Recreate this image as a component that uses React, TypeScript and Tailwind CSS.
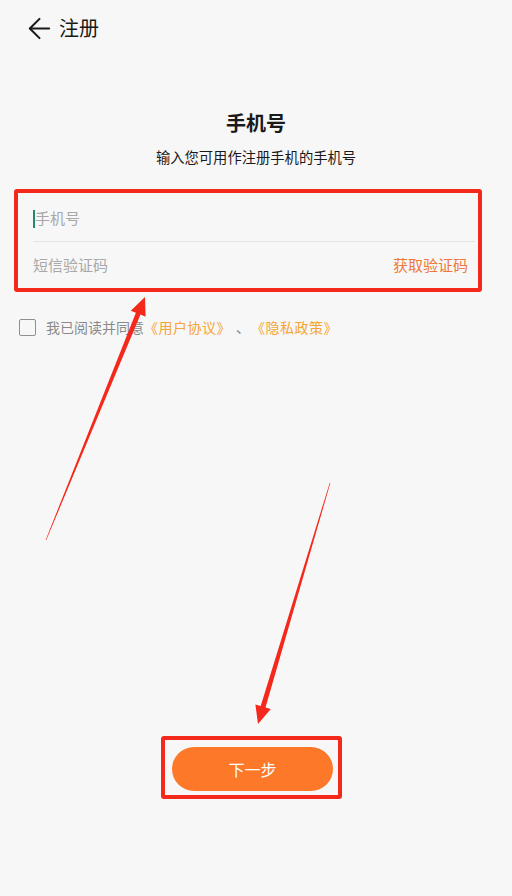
import { ArrowLeft } from "lucide-react";

const font = { fontFamily: '"Noto Sans CJK SC", "Noto Sans", sans-serif' };

function Arrows() {
  return (
    <svg className="pointer-events-none absolute inset-0" width="512" height="896" viewBox="0 0 512 896">
      <polygon
        fill="#f5281c"
        points="45.7,539.9 135.9,312.8 130.8,310.7 145,297 145.6,316.7 140.5,314.6 46.3,540.1"
      />
      <polygon
        fill="#f5281c"
        points="329.7,482.9 260.7,706.1 255.4,704.5 258,724 270.8,709.1 265.5,707.5 330.3,483.1"
      />
    </svg>
  );
}

export default function App() {
  return (
    <div className="relative h-[896px] w-[512px] overflow-hidden bg-[#f7f7f7] text-[#1a1a1a]" style={font}>
      <header className="flex h-14 items-center pl-[23px]">
        <ArrowLeft className="h-[33px] w-[33px]" strokeWidth={1.5} />
        <span className="ml-[3px] text-[20px]">注册</span>
      </header>

      <div className="mt-[53px] flex flex-col items-center">
        <h1 className="text-[20px] font-bold leading-7">手机号</h1>
        <p className="mt-[10px] text-[14.3px] leading-5 text-[#1a1a1a]">输入您可用作注册手机的手机号</p>
      </div>

      <div className="ml-[14px] mt-[22px] w-[468px] rounded-[3px] border-[4px] border-[#f5281c]">
        <div className="pl-[15px] pr-[3px]">
          <div className="flex h-[49px] items-center border-b border-[#e4e4e4] pt-[3px]">
            <span className="h-[18px] w-[2px] bg-[#1f8a70]" />
            <span className="text-[15px] text-[#a8a8a8]">手机号</span>
          </div>
          <div className="flex h-[46px] items-center justify-between pr-[7px]">
            <span className="text-[15px] text-[#a8a8a8]">短信验证码</span>
            <span className="text-[15px] text-[#f0773a]">获取验证码</span>
          </div>
        </div>
      </div>

      <div className="mt-[25px] flex items-center pl-[19px] text-[14px]">
        <span className="h-[17px] w-[17px] rounded-[2px] border-[1.5px] border-[#8f8f8f]" />
        <span className="ml-[10px] text-[#8a8a8a]">我已阅读并同意</span>
        <span className="tracking-[0.5px] text-[#f5a531]">《用户协议》</span>
        <span className="ml-[5px] text-[#8a8a8a]">、</span>
        <span className="ml-[1px] tracking-[0.5px] text-[#f5a531]">《隐私政策》</span>
      </div>

      <div className="mt-[398px] flex">
        <div className="ml-[161px] rounded-[3px] border-[4px] border-[#f5281c] pb-[4px] pl-[7px] pr-[5px] pt-[7px]">
          <button className="block h-[44px] w-[161px] rounded-full bg-[#fd7828] text-[16px] text-white">
            下一步
          </button>
        </div>
      </div>

      <Arrows />
    </div>
  );
}
